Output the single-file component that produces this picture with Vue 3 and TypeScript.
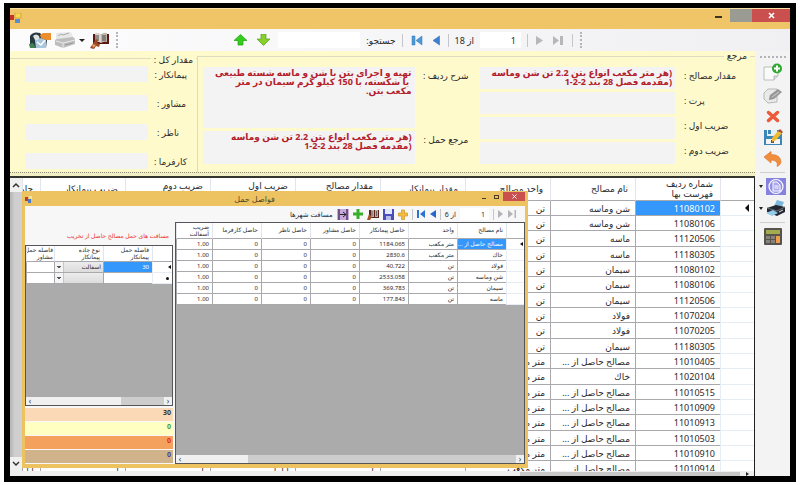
<script setup lang="ts">
import { ref } from 'vue'

interface Row { code: string; name: string; unit: string; extra?: string[] }
interface Haul { name: string; unit: string; amount: string }

const rest = 'مصالح حاصل از ...'
const cubic = 'متر مکعب'
const rows: Row[] = [
  { code: '11080102', name: 'شن وماسه', unit: 'تن' },
  { code: '11080106', name: 'شن وماسه', unit: 'تن' },
  { code: '11120506', name: 'ماسه', unit: 'تن' },
  { code: '11180305', name: 'ماسه', unit: 'تن' },
  { code: '11080102', name: 'سیمان', unit: 'تن' },
  { code: '11080106', name: 'سیمان', unit: 'تن' },
  { code: '11120506', name: 'سیمان', unit: 'تن' },
  { code: '11070204', name: 'فولاد', unit: 'تن' },
  { code: '11070205', name: 'فولاد', unit: 'تن' },
  { code: '11180305', name: 'سیمان', unit: 'تن' },
  { code: '11010405', name: rest, unit: cubic },
  { code: '11020104', name: 'خاك', unit: cubic },
  { code: '11010515', name: rest, unit: cubic },
  { code: '11010909', name: rest, unit: cubic },
  { code: '11010913', name: rest, unit: cubic },
  { code: '11010503', name: rest, unit: cubic },
  { code: '11010910', name: rest, unit: cubic },
  { code: '11010914', name: rest, unit: cubic, extra: ['', '1', '1.11', '1', '1', '11'] },
]
const heads = ['مقدار پیمانکار', 'مقدار مصالح', 'ضریب اول', 'ضریب دوم', 'ضریب پیمانکار', 'حاصل']
const hauls: Haul[] = [
  { name: rest, unit: cubic, amount: '1184.065' },
  { name: 'خاك', unit: cubic, amount: '2830.6' },
  { name: 'فولاد', unit: 'تن', amount: '40.722' },
  { name: 'شن وماسه', unit: 'تن', amount: '2533.058' },
  { name: 'سیمان', unit: 'تن', amount: '369.783' },
  { name: 'ماسه', unit: 'تن', amount: '177.843' },
]
const totals = [
  { value: '30', kind: 'peach' },
  { value: '0', kind: 'lemon' },
  { value: '0', kind: 'orange' },
  { value: '0', kind: 'tan' },
]
const totalFields = ['پیمانکار :', 'مشاور :', 'ناظر :', 'کارفرما :']
const factorFields = ['پرت :', 'ضریب اول :', 'ضریب دوم :']

const reference = '(هر متر مکعب انواع بتن 2.2 تن شن وماسه\n(مقدمه فصل 28 بند 2-2-1'
const description = 'تهیه و اجرای بتن با شن و ماسه شسته طبیعی\n یا شکسته، با 150 کیلو گرم سیمان در متر\nمکعب بتن.'
const search = ref('')
const position = ref('1')
const haulPosition = ref('1')
const road = ref('آسفالت')
const road2 = ref('')
</script>

<template>
  <main class="frame" dir="rtl">
    <header class="titlebar">
      <button class="win close" aria-label="بستن"><svg width="7" height="7" viewBox="0 0 7 7"><path d="M1 1l5 5M6 1L1 6" stroke="#fff" stroke-width="1.6" /></svg></button>
      <button class="win max" aria-label="بزرگ"></button>
      <button class="win min" aria-label="کوچک"><i></i></button>
      <svg class="appicon" width="12" height="11" viewBox="0 0 12 11"><rect x="5" y="0" width="6" height="5" fill="#f8d850" stroke="#b89030" stroke-width=".6" /><rect x="0" y="2" width="4" height="5" fill="#c83028" /><rect x="5" y="6" width="5" height="4" fill="#5b8bd0" /></svg>
    </header>

    <nav class="toolbar">
      <div class="strip nav">
        <i class="vgrip"></i>
        <i class="sep"></i>
        <button aria-label="آخرین"><svg width="11" height="11" viewBox="0 0 11 11"><path d="M0 1l6 4.500-6 4.500zM7 1h3v9H7z" fill="#b7b7ba" /></svg></button>
        <button aria-label="بعدی"><svg width="7" height="11" viewBox="0 0 7 11"><path d="M0 1l7 4.500-7 4.500z" fill="#b7b7ba" /></svg></button>
        <i class="sep"></i>
        <input v-model="position" class="pos" aria-label="ردیف جاری">
        <span class="of">از 18</span>
        <i class="sep"></i>
        <button aria-label="قبلی"><svg width="7" height="11" viewBox="0 0 7 11"><path d="M6.500 1v9L0 5.500z" fill="#3d7fd0" stroke="#2a62b4" stroke-width=".5" /></svg></button>
        <button aria-label="اولین"><svg width="12" height="11" viewBox="0 0 12 11"><path d="M11 1v9L5 5.500zM1 1h3v9H1z" fill="#4d9bd6" stroke="#2f74b8" stroke-width=".5" /></svg></button>
        <i class="sep"></i>
        <label for="search">جستجو:</label>
        <input id="search" v-model="search" class="search">
        <button aria-label="پایین"><svg width="13" height="12" viewBox="0 0 13 12"><path d="M4 0h5v5h4L6.500 11.500 0 5h4z" fill="#86cf2c" stroke="#58a018" stroke-width=".7" /></svg></button>
        <button aria-label="بالا"><svg width="13" height="12" viewBox="0 0 13 12"><path d="M4 11h5V6.500h4L6.500.5 0 6.500h4z" fill="#35cd1e" stroke="#239a14" stroke-width=".7" /></svg></button>
      </div>
      <div class="strip">
        <i class="vgrip"></i>
        <button aria-label="فهرست بها"><svg width="22" height="17" viewBox="0 0 22 17"><path d="M4 2h7l1 1 1-1h7v10H4z" fill="#5b1515" /><path d="M6 1q4-1 6 1.500V11q-3-2-6-1z" fill="#ddd5cd" /><path d="M18 1q-4-1-6 1.500V11q3-2 6-1z" fill="#bfb7b0" /><path d="M7 3v6M9 3v6M14 3v6M16 3v6" stroke="#444" /><path d="M7 7l2 1-1 3 3 1-1 3-3-1-2 3-4-1 2-3z" fill="#9c4a22" /><path d="M3 12l4 1-3 3z" fill="#e2a36d" /></svg></button>
        <span class="caret"></span>
        <button aria-label="اسکن"><svg width="20" height="17" viewBox="0 0 20 17"><path d="M1 1l15-1 3 7-18 2z" fill="#e8e8e8" /><path d="M3 4l3-2 2 1 6-2" stroke="#aaa" fill="none" /><path d="M0 9q0-2 2-2l16-2 2 2v5l-12 4-8-3z" fill="#bdbdbd" /><path d="M1 9l7 2 12-3M8 11v5" stroke="#e9e9e9" fill="none" /><path d="M10 13l8-2" stroke="#999" /></svg></button>
        <button aria-label="پیمانکار"><svg width="22" height="17" viewBox="0 0 22 17"><path d="M1 14L1 4q3-5 10-3l7 7-1 8H4z" fill="#293b42" /><path d="M4 4q3-3 6 0l1 4-4 2z" fill="#dfe3e4" /><path d="M6 9l6-3 5 2v8H7z" fill="#a9c6dc" /><path d="M8 10l4 3 4-5" stroke="#fff" stroke-width="1.500" fill="none" /><path d="M0 12l4-1 3 5H1z" fill="#3f8150" /><path d="M11 3l3-2h8v7h-5l-5-2z" fill="#ed8e2c" /></svg></button>
      </div>
    </nav>

    <div class="content">
      <aside class="side">
        <i class="hgrip"></i>
        <button aria-label="جدید"><svg width="20" height="19" viewBox="0 0 20 19"><path d="M1 4h14v9l-4 4H1z" fill="#fafafa" stroke="#bdbdbd" /><path d="M11 17v-4h4" fill="#ddd" stroke="#b5b5b5" /><circle cx="14" cy="5.500" r="5" fill="#30a832" /><path d="M14 2.500v6M11 5.500h6" stroke="#fff" stroke-width="2" /></svg></button>
        <button aria-label="ویرایش"><svg width="20" height="18" viewBox="0 0 20 18"><path d="M5 2h9v13l-9 1-4-4V6z" fill="#e9e9e9" stroke="#b8b8b8" /><path d="M6 12l1-4 8-6 4 3-8 7-5 1z" fill="#989898" /><path d="M9 10l7-5" stroke="#d0d0d0" /></svg></button>
        <button aria-label="حذف"><svg width="14" height="13" viewBox="0 0 14 13"><path d="M2.500 2.500l9 8M11.500 2.500l-9 8" stroke="#ec5a3a" stroke-width="3.500" fill="none" stroke-linecap="round" /></svg></button>
        <button aria-label="ذخیره"><svg width="20" height="18" viewBox="0 0 20 18"><path d="M1 2h16l2 2v13H1z" fill="#3b88b8" /><path d="M4 2h10v6H4z" fill="#e5f0f6" /><path d="M5 2h3v4H5z" fill="#3b88b8" /><path d="M3 11h14v5H3z" fill="#f4f4f4" /><path d="M8 12h3v3H8z" fill="#555" /><path d="M9 10l6-7 4 2-6 7-4 2z" fill="#f3b92f" /><path d="M15 3l2-2 3 3-1 1z" fill="#b54a2f" /></svg></button>
        <button aria-label="بازگشت"><svg width="18" height="16" viewBox="0 0 18 16"><path d="M0 6l7-5.500v3q10 0 10 8-1 3-4 4 2-6-6-6.500v3z" fill="#f18e3d" stroke="#d8702a" stroke-width=".6" /></svg></button>
        <i class="line"></i>
        <div class="split"><span class="caret"></span><button aria-label="گزارش"><svg width="20" height="17" viewBox="0 0 20 17"><rect width="20" height="17" fill="#8583df" /><circle cx="10" cy="8.500" r="7" fill="#9290e6" stroke="#fff" stroke-width="1.200" /><path d="M7 4h4l3 3v6H7z" fill="#aaa8ee" stroke="#fff" /><path d="M8.500 8h4M8.500 10h4" stroke="#fff" /></svg></button></div>
        <div class="split"><span class="caret"></span><button aria-label="چاپ"><svg width="20" height="17" viewBox="0 0 20 17"><path d="M8 6l3-6 7 2-3 7z" fill="#7fb6dc" /><path d="M1 8l9-3 9 2v5l-8 4-10-4z" fill="#23272f" /><path d="M1 8l10 3 8-4" stroke="#69727e" fill="none" /><path d="M0 13l7-3 5 3-6 3z" fill="#93cbe9" /><path d="M13 12l4-2" stroke="#ddd" /></svg></button></div>
        <i class="line"></i>
        <button aria-label="ماشین حساب"><svg width="20" height="18" viewBox="0 0 20 18"><rect x="1" width="18" height="17" rx="1" fill="#57544e" /><rect x="3" y="2" width="14" height="4" fill="#a3aa50" /><path d="M3 8h4v3H3zM8 8h4v3H8zM3 12h4v3H3zM8 12h4v3H8z" fill="#87837c" /><path d="M13 8h4v7h-4z" fill="#ef9d49" /></svg></button>
      </aside>

      <div class="work">
        <section class="panel">
          <fieldset class="ref">
            <legend>مرجع</legend>
            <div class="grid factors">
              <label for="qty">مقدار مصالح :</label>
              <textarea id="qty" readonly :value="reference"></textarea>
              <template v-for="(f, i) in factorFields" :key="f">
                <label :for="'factor' + i">{{ f }}</label>
                <input :id="'factor' + i" readonly>
              </template>
            </div>
            <div class="grid texts">
              <label for="desc">شرح ردیف :</label>
              <textarea id="desc" readonly :value="description"></textarea>
              <label for="haulref">مرجع حمل :</label>
              <textarea id="haulref" readonly :value="reference"></textarea>
            </div>
          </fieldset>
          <fieldset class="sum">
            <legend>مقدار کل :</legend>
            <div class="grid totals-grid">
              <template v-for="(f, i) in totalFields" :key="f">
                <label :for="'total' + i">{{ f }}</label>
                <input :id="'total' + i" readonly>
              </template>
            </div>
          </fieldset>
        </section>
        <div class="splitter"></div>

        <section class="list">
          <div class="list-body">
            <div class="clip">
              <table class="main">
                <colgroup><col class="c-mark"><col v-for="n in 8" :key="n" class="c-main"><col></colgroup>
                <thead>
                  <tr>
                    <th></th>
                    <th>شماره ردیف<br>فهرست بها</th>
                    <th>نام مصالح</th>
                    <th>واحد مصالح</th>
                    <th v-for="(h, i) in heads" :key="h" :class="{ high: i > 0 && i < 4 }">{{ h }}</th>
                  </tr>
                </thead>
                <tbody>
                  <tr v-for="(r, i) in rows" :key="i">
                    <th class="mark"><span v-if="i === 0" class="pointer"></span></th>
                    <td :class="{ selected: i === 0 }">{{ r.code }}</td>
                    <td>{{ r.name }}</td>
                    <td>{{ r.unit }}</td>
                    <td v-for="n in 6" :key="n">{{ r.extra ? r.extra[n - 1] : '' }}</td>
                  </tr>
                </tbody>
              </table>
            </div>
            <div class="vscroll">
              <svg width="8" height="6" viewBox="0 0 8 6"><path d="M1 5l3-3 3 3" fill="none" stroke="#333" stroke-width="1.500" /></svg>
              <i></i>
              <svg width="8" height="6" viewBox="0 0 8 6"><path d="M1 1l3 3 3-3" fill="none" stroke="#333" stroke-width="1.500" /></svg>
            </div>
          </div>
          <div class="hthin"><span class="tip"></span><i></i></div>

          <section class="dialog" role="dialog" aria-labelledby="dlg-title">
            <header class="dlg-title">
              <button class="dclose" aria-label="بستن"><svg width="5" height="5" viewBox="0 0 5 5"><path d="M.5.5l4 4M4.500.5l-4 4" stroke="#fff" /></svg></button>
              <button class="dbtn" aria-label="بزرگ"><i class="box"></i></button>
              <button class="dbtn" aria-label="کوچک"><i class="dash"></i></button>
              <h2 id="dlg-title">فواصل حمل</h2>
              <svg width="7" height="7" viewBox="0 0 7 7"><rect x="0" y="1" width="3" height="4" fill="#b6402f" /><rect x="3" y="3" width="3" height="4" fill="#4a78c8" /><rect x="4" y="0" width="3" height="3" fill="#f4e4a0" /></svg>
            </header>
            <div class="dlg-body">
              <div class="dlg-right">
                <div class="dlg-tools">
                  <button aria-label="آخرین"><svg width="9" height="10" viewBox="0 0 9 10"><path d="M0 1l5 4-5 4zM6.500 1H8v8H6.500z" fill="#b4b4b8" /></svg></button>
                  <button aria-label="بعدی"><svg width="6" height="10" viewBox="0 0 6 10"><path d="M0 1l5 4-5 4z" fill="#b4b4b8" /></svg></button>
                  <i class="sep"></i>
                  <input v-model="haulPosition" aria-label="ردیف حمل">
                  <span>از 6</span>
                  <i class="sep"></i>
                  <button aria-label="قبلی"><svg width="6" height="10" viewBox="0 0 6 10"><path d="M6 1v8L0 5z" fill="#2866cf" /></svg></button>
                  <button aria-label="اولین"><svg width="9" height="10" viewBox="0 0 9 10"><path d="M8 1v8L3 5zM0 1h2v8H0z" fill="#2e72cf" /></svg></button>
                  <i class="sep"></i>
                  <button aria-label="جدید"><svg width="10" height="11" viewBox="0 0 10 11"><path d="M3.500 1h3v3h3v3h-3v3.500h-3V7h-3V4h3z" fill="#f1bd3d" stroke="#cf942a" stroke-width=".7" /></svg></button>
                  <button aria-label="ذخیره"><svg width="11" height="11" viewBox="0 0 11 11"><path d="M0 0h11v11H0z" fill="#4a4cbc" /><path d="M2 0h7v5H2z" fill="#e4e8fa" /><path d="M3 7h5v4H3z" fill="#b7bbe6" /></svg></button>
                  <button aria-label="فهرست"><svg width="12" height="11" viewBox="0 0 12 11"><path d="M2 1h10v8H2z" fill="#5a2018" /><path d="M4 1h3v7H4zM8 1h3v7H8z" fill="#bdb1a8" /><path d="M5 2v5M9.500 2v5" stroke="#444" stroke-width=".7" /><path d="M2 5l3 3-2 3H0z" fill="#a3552a" /></svg></button>
                  <button aria-label="افزودن"><svg width="10" height="10" viewBox="0 0 10 10"><path d="M3.500 0h3v3.500H10v3H6.500V10h-3V6.500H0v-3h3.500z" fill="#36b02a" /></svg></button>
                  <button aria-label="مسافت شهرها"><svg width="12" height="11" viewBox="0 0 12 11"><path d="M0 0h12v11H0z" fill="#c7a9dc" /><path d="M2 0v11M10 0v11" stroke="#51366b" stroke-width="1.500" /><path d="M3 5.500h6M6 3l3 2.500L6 8" stroke="#222" fill="none" /></svg></button>
                  <span>مسافت شهرها</span>
                </div>
                <div class="well">
                  <table class="small">
                    <colgroup><col class="s-mark"><col v-for="n in 6" :key="n" class="s-col"><col></colgroup>
                    <thead>
                      <tr><th></th><th>نام مصالح</th><th>واحد</th><th>حاصل پیمانکار</th><th>حاصل مشاور</th><th>حاصل ناظر</th><th>حاصل کارفرما</th><th>ضریب<br>آسفالت</th></tr>
                    </thead>
                    <tbody>
                      <tr v-for="(h, i) in hauls" :key="i">
                        <th class="mark"><span v-if="i === 0" class="pointer"></span></th>
                        <td :class="{ selected: i === 0 }">{{ h.name }}</td>
                        <td>{{ h.unit }}</td>
                        <td>{{ h.amount }}</td>
                        <td>0</td><td>0</td><td>0</td><td>1.00</td>
                      </tr>
                    </tbody>
                  </table>
                  <div class="hscroll long"><span>‹</span><i></i><b></b><span>›</span></div>
                </div>
              </div>
              <div class="dlg-left">
                <h3>مسافت های حمل مصالح حاصل از تخریب</h3>
                <div class="well">
                  <table class="small">
                    <colgroup><col class="r-mark"><col class="s-col"><col class="s-col"><col></colgroup>
                    <thead>
                      <tr><th></th><th>فاصله حمل<br>پیمانکار</th><th>نوع جاده<br>پیمانکار</th><th class="tight">فاصله حمل<br>مشاور</th></tr>
                    </thead>
                    <tbody>
                      <tr>
                        <th class="mark"><span class="pointer"></span></th>
                        <td class="selected">30</td>
                        <td class="pick"><select v-model="road" aria-label="نوع جاده"><option>آسفالت</option></select></td>
                        <td></td>
                      </tr>
                      <tr>
                        <th class="mark"><span class="dot"></span></th>
                        <td></td>
                        <td class="pick"><select v-model="road2" aria-label="نوع جاده جدید"><option></option></select></td>
                        <td></td>
                      </tr>
                    </tbody>
                  </table>
                  <div class="hscroll short"><span>‹</span><i></i><b></b><span>›</span></div>
                </div>
                <div class="bars">
                  <div v-for="t in totals" :key="t.kind" :class="t.kind">{{ t.value }}</div>
                </div>
              </div>
            </div>
          </section>
        </section>
      </div>
    </div>
  </main>
</template>

<style>
body { background: #fefefe; }
</style>

<style scoped>
* { box-sizing: border-box; }
.frame {
  display: flex; flex-direction: column; height: calc(100vh - 6px); margin: 3px 4px 3px;
  border: 5px solid #000; border-width: 5px 6px 6px; background: #f0f0f0; overflow: hidden;
  font-family: "Noto Sans", "DejaVu Sans", sans-serif; font-size: 9px; line-height: 9px; color: #2a2a2e;
}
button { display: flex; align-items: center; justify-content: center; padding: 0; border: 0; background: none; }
svg { display: block; }
input, textarea, select { font: inherit; color: inherit; border: 0; border-radius: 0; padding: 0; margin: 0; outline: 0; min-width: 0; }

.titlebar { display: flex; flex: none; align-items: flex-start; height: 21px; background: #efc567; border-top: 1px solid #f9e3a6; }
.win { height: 13px; }
.close { width: 38px; background: #c9504e; }
.max { width: 22px; background: #9a9b93; }
.min { width: 24px; }
.min i { width: 7px; height: 2px; margin-top: 3px; background: #3c3320; }
.appicon { margin: 4px auto 0 0; }

.toolbar { display: flex; flex: none; justify-content: space-between; height: 22px; padding: 0 208px 0 19px; background: linear-gradient(90deg, #fcfcfd, #f0f0f2); }
.strip { display: flex; align-items: center; gap: 4px; }
.strip.nav { gap: 6px; }
.strip.nav button { margin: 0 2px; }
.sep { width: 1px; height: 13px; background: #c6c6ca; }
.vgrip { width: 3px; height: 16px; border-right: 2px dotted #b6b6ba; }
.pos { width: 41px; height: 16px; padding: 0 5px; background: #fff; }
.search { width: 82px; height: 16px; background: #fff; }
.caret { width: 0; height: 0; border: 3px solid transparent; border-top-color: #222; border-bottom: 0; }
.split .caret { border-width: 3px 2px 0; }

.content { display: flex; flex: 1; min-height: 0; }
.side { display: flex; flex: none; flex-direction: column; align-items: center; gap: 5px; width: 35px; padding: 5px 5px 0; background: #f3f3f4; }
.hgrip { width: 26px; height: 2px; border-top: 2px dotted #b4b4b8; }
.line { align-self: stretch; height: 1px; background: #cfcfd2; }
.split { display: flex; align-items: center; gap: 3px; direction: ltr; }
.work { display: flex; flex: 1; flex-direction: column; min-width: 0; }

.panel { display: flex; flex: none; height: 121px; background: #fffacb; }
fieldset { min-width: 0; margin: 0; padding: 0; border: 0 solid #dedcc0; border-top-width: 1px; }
legend { padding: 0 3px; }
.ref { display: flex; flex: 1; gap: 11px; height: 121px; border-left-width: 1px; padding: 6px 17px 0 5px; }
.ref legend { height: 10px; margin-right: -12px; }
.sum { width: 187px; padding: 1px 10px 0 15px; }
.sum legend { height: 14px; margin-right: -9px; padding-top: 4px; }
.grid { display: grid; column-gap: 9px; align-content: start; }
.grid label { text-align: left; padding-top: 4px; white-space: nowrap; }
.grid input, .grid textarea { width: 100%; height: 100%; background: #f3f3f4; }
.grid textarea { resize: none; overflow: hidden; white-space: pre; color: #b4202a; font-weight: bold; padding: 1px 3px; display: block; }
.factors { flex: 258; grid-template-columns: 54px 1fr; grid-template-rows: repeat(4, 22px); row-gap: 3px; }
.texts { flex: 265; grid-template-columns: 45px 1fr; grid-template-rows: 61px 33px; row-gap: 3px; }
.totals-grid { grid-template-columns: 30px 1fr; grid-template-rows: repeat(4, 16px); row-gap: 13px; }
.splitter { flex: none; height: 6px; background: #f3efc4; border-top: 1px dotted #8c8a70; border-bottom: 2px solid #35352f; }

.list { position: relative; display: flex; flex: 1; flex-direction: column; min-height: 0; border-right: 1px solid #222; background: #fff; }
.list-body { display: flex; flex: 1; min-height: 0; }
.clip { flex: 1; min-width: 0; overflow: hidden; }
table { width: 100%; table-layout: fixed; border-collapse: separate; border-spacing: 0; background: #fff; }
th, td { padding: 0 5px; border: 0 solid #a9a9ad; border-width: 0 0 1px 1px; text-align: right; font-weight: normal; white-space: nowrap; overflow: hidden; }
thead th { border-left-color: #e2e6ec; }
.main thead tr { height: 23px; }
.main thead th { padding: 0 7px; line-height: 10px; }
.main thead .high { vertical-align: top; padding-top: 3px; }
.main tbody tr { height: 15px; }
.main tbody tr:nth-child(3n) { height: 16px; }
.c-mark { width: 34px; }
.c-main { width: 85px; }
.mark { border-color: #e6edf5; }
.selected { background: #3397fb; color: #fff; }
.pointer { display: block; width: 0; height: 0; border: 4px solid transparent; border-right: 4px solid #111; border-left: 0; }
.vscroll { display: flex; flex: none; flex-direction: column; align-items: center; width: 12px; padding: 4px 0; gap: 4px; background: #f0f0f0; }
.vscroll i { flex: 1; width: 100%; background: linear-gradient(90deg, #b4b4b4, #cfcfcf 40%); }
.hthin { display: flex; flex: none; height: 5px; background: #eee; align-items: center; padding-right: 5px; gap: 6px; }
.hthin i { width: 220px; height: 4px; background: #c8c8c8; }
.tip { border: 2px solid transparent; border-left: 3px solid #222; border-right: 0; }

.dialog { position: absolute; top: 13px; bottom: 8px; left: 12px; width: 506px; display: flex; flex-direction: column; background: #edc361; padding: 0 3px 4px; font-size: 6px; line-height: 7px; }
.dlg-title { display: flex; flex: none; align-items: flex-start; height: 15px; padding-top: 1px; }
.dlg-title h2 { flex: 1; margin: 3px 0 0; font-size: 8px; line-height: 8px; font-weight: normal; text-align: center; color: #54462a; }
.dlg-title > svg { margin-top: 4px; }
.dclose { width: 22px; height: 9px; background: #c9504e; }
.dbtn { width: 13px; height: 9px; }
.box { width: 5px; height: 4px; border: 1px solid #4a3d20; }
.dash { width: 4px; height: 1px; margin-top: 3px; background: #4a3d20; }
.dlg-body { display: flex; flex: 1; min-height: 0; background: #f7f7f8; gap: 2px; }
.dlg-right { display: flex; flex-direction: column; width: 350px; }
.dlg-left { display: flex; flex: 1; flex-direction: column; min-width: 0; }
.dlg-tools { display: flex; flex: none; align-items: center; gap: 4px; height: 16px; padding-right: 8px; font-size: 7px; }
.dlg-tools .sep { height: 11px; }
.dlg-tools input { width: 29px; height: 12px; padding: 0 4px; background: #fff; }
.well { display: flex; flex: 1; flex-direction: column; justify-content: space-between; min-height: 0; background: #ababab; border: 1px solid #55565a; }
.small thead tr { height: 16px; }
.small tbody tr { height: 11px; }
.small th, .small td { padding: 0 3px; }
.small .mark { padding: 0 1px; }
.small .tight { padding: 0 1px; }
.small .pointer { border-width: 2px 3px 2px 0; }
.s-mark { width: 18px; }
.s-col { width: 49px; }
.r-mark { width: 20px; }
.dot { display: block; width: 3px; height: 3px; margin: 0 2px; background: #111; border-radius: 50%; }
.small .pick { padding: 0; background: #e3e3e3 linear-gradient(#ececec, #dcdcdc); }
.pick select { display: block; width: 100%; height: 10px; padding: 0 2px; appearance: none; background: linear-gradient(45deg, transparent 50%, #555 50%) 2px 4px / 2px 2px no-repeat, linear-gradient(-45deg, transparent 50%, #555 50%) 4px 4px / 2px 2px no-repeat, linear-gradient(90deg, #f4f4f4 8px, #c6c6c6 8px, #c6c6c6 9px, transparent 9px); }
.hscroll { display: flex; flex: none; height: 8px; background: #f0f0f0; align-items: center; }
.hscroll span { width: 8px; text-align: center; font-size: 8px; line-height: 6px; color: #333; }
.hscroll i { align-self: stretch; background: #cdcdcd; }
.hscroll b { flex: 1; }
.long i { width: 268px; }
.short i { width: 43px; }
.dlg-left h3 { flex: none; height: 39px; margin: 0; padding: 27px 4px 0; font-size: 6px; line-height: 7px; font-weight: normal; color: #e8342f; }
.bars { display: grid; flex: none; gap: 1px; padding: 2px 0 1px; }
.bars div { height: 13px; padding: 1px 2px; font-weight: bold; font-size: 7px; }
.peach { background: #fcd9b6; color: #333; }
.lemon { background: #ffffc2; color: #4a9a32; }
.orange { background: #f4a15e; color: #e22a1c; }
.tan { background: #d1b38b; color: #4a3aa8; }
</style>
